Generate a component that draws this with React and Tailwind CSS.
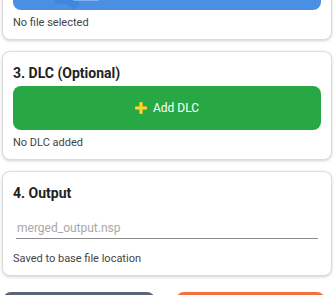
import React from "react";

function Plus() {
  return (
    <svg width="12" height="12" viewBox="0 0 12 12" className="mr-[6px]">
      <rect x="4.5" y="0" width="3" height="12" rx="1" fill="#FDD835" stroke="#F4B400" strokeWidth="0.4" />
      <rect x="0" y="4.5" width="12" height="3" rx="1" fill="#FDD835" stroke="#F4B400" strokeWidth="0.4" />
    </svg>
  );
}

function Card({ children }) {
  return (
    <div className="w-[330px] ml-[2px] bg-white rounded-[8px] border border-[#dcdcdc] shadow-[0_1px_3px_rgba(0,0,0,0.18)] px-[10px] pt-[11px] pb-[8px]">
      {children}
    </div>
  );
}

export default function App() {
  return (
    <div className="w-[335px] h-[295px] overflow-hidden bg-white" style={{ fontFamily: "Roboto, 'Noto Sans', sans-serif" }}>
      <div className="-mt-[69px] flex flex-col gap-[11px]">
        <Card>
          <div className="h-[20px] leading-[20px] text-[14px] font-bold text-[#222]">2. Update File</div>
          <button className="relative mt-[3px] w-full h-[44px] rounded-[8px] bg-[#4a8fe2] text-white text-[12px] flex items-center justify-center">
            <svg className="absolute left-[42px] bottom-0" width="44" height="12" viewBox="0 0 44 12">
              <path d="M0 0 H24 V6 L19 12 L12 6 H0 Z" fill="#3f86de" />
              <rect x="18" y="0" width="26" height="3" rx="1" fill="#7fb3ef" />
            </svg>
            Select Update File
          </button>
          <div className="mt-[5px] h-[16px] leading-[16px] text-[11px] text-[#444]">No file selected</div>
        </Card>
        <Card>
          <div className="h-[20px] leading-[20px] text-[14px] font-bold text-[#222]">3. DLC (Optional)</div>
          <button className="mt-[3px] w-full h-[44px] rounded-[8px] bg-[#28a745] text-white text-[12px] flex items-center justify-center">
            <Plus />
            Add DLC
          </button>
          <div className="mt-[5px] h-[16px] leading-[16px] text-[11px] text-[#444]">No DLC added</div>
        </Card>
        <Card>
          <div className="h-[20px] leading-[20px] text-[14px] font-bold text-[#222]">4. Output</div>
          <div className="mt-[11px] mx-[3px] h-[25px] border-b border-[#8a8a8a] pt-[4px] pl-[1px]">
            <div className="leading-[20px] text-[12px] text-[#a8a8a8]">merged_output.nsp</div>
          </div>
          <div className="mt-[12px] h-[16px] leading-[16px] text-[11px] text-[#444]">Saved to base file location</div>
        </Card>
      </div>
      <div className="mt-[16px] flex">
        <div className="ml-[3px] w-[152px] h-[40px] rounded-[8px] bg-[#5b6675]" />
        <div className="ml-[21px] w-[149px] h-[40px] rounded-[8px] bg-[#f4703f]" />
      </div>
    </div>
  );
}
